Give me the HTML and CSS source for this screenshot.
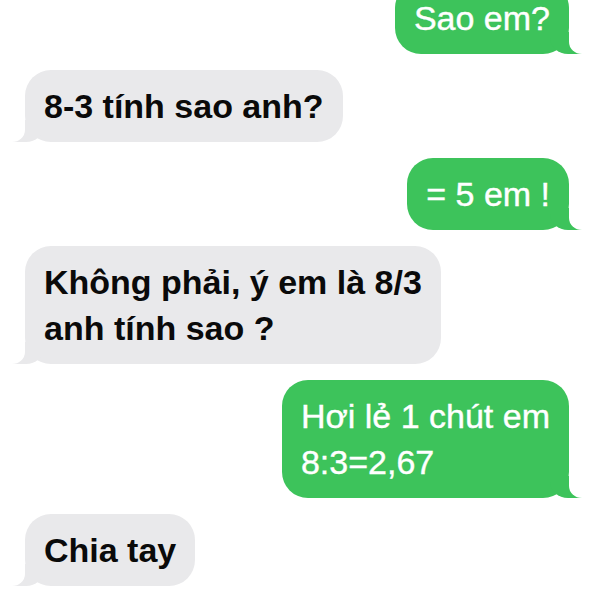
FILE: index.html
```html
<!DOCTYPE html>
<html lang="vi">
<head>
  <meta charset="UTF-8" />
  <meta name="viewport" content="width=device-width, initial-scale=1.0"/>
  <title>Tin nhắn</title>
  <link rel="stylesheet" href="styles.css">
</head>
<body>

  <div class="chat">
    <div class="msg sent">Sao em?</div>
    <div class="msg received">8-3 tính sao anh?</div>
    <div class="msg sent">= 5 em !</div>
    <div class="msg received">Không phải, ý em là 8/3<br>anh tính sao ?</div>
    <div class="msg sent">Hơi lẻ 1 chút em<br>8:3=2,67</div>
    <div class="msg received">Chia tay</div>
  </div>

</body>
</html>
```

FILE: styles.css
```css
* {
  box-sizing: border-box;
  margin: 0;
  padding: 0;
}

body {
  font-family: 'Liberation Sans', Arial, sans-serif;
  background-color: #fff;
  overflow: hidden;
}

.chat {
  display: flex;
  flex-direction: column;
  gap: 16px;
  margin-top: -18px;
  padding: 0 31px 0 25px;
}

.msg {
  position: relative;
  padding: 13px 19px;
  border-radius: 26px;
  font-size: 34px;
  line-height: 46px;
}

.sent {
  align-self: flex-end;
  background-color: #3dc35b;
  color: #fff;
  -webkit-text-stroke: 0.4px #fff;
}

.received {
  align-self: flex-start;
  background-color: #e9e9eb;
  color: #0a0a0a;
  font-weight: bold;
}

/* bubble tails */
.msg::before,
.msg::after {
  content: "";
  position: absolute;
  bottom: 0;
  height: 22px;
}

.sent::before {
  right: -13px;
  width: 32px;
  background-color: #3dc35b;
  border-bottom-left-radius: 18px 16px;
}

.sent::after {
  right: -40px;
  width: 40px;
  background-color: #fff;
  border-bottom-left-radius: 13px 12px;
}

.received::before {
  left: -13px;
  width: 32px;
  background-color: #e9e9eb;
  border-bottom-right-radius: 18px 16px;
}

.received::after {
  left: -40px;
  width: 40px;
  background-color: #fff;
  border-bottom-right-radius: 13px 12px;
}
```
